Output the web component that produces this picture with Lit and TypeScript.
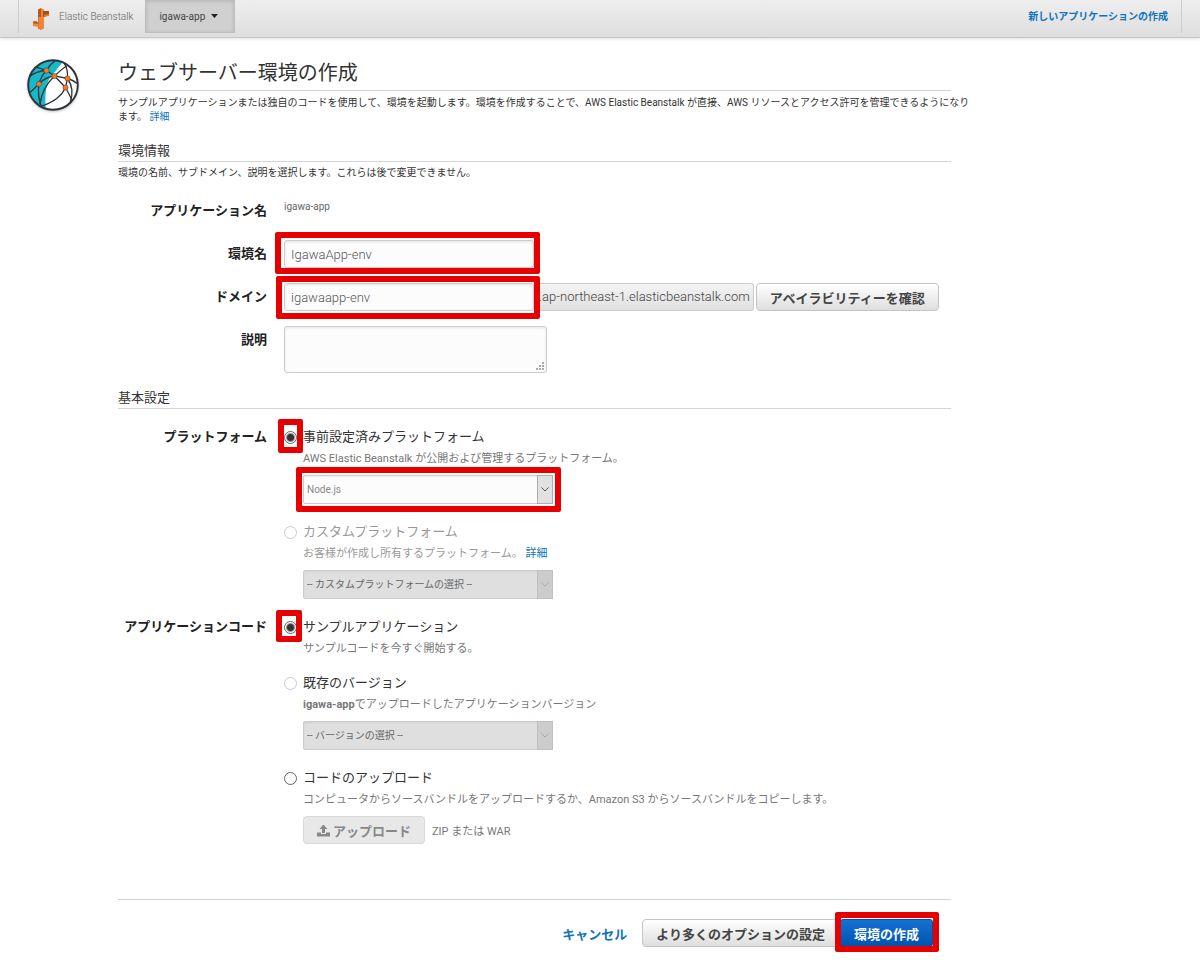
import { LitElement, html, css, svg, nothing } from "lit";
import { customElement, property } from "lit/decorators.js";

const controls = css`
  * {
    box-sizing: border-box;
  }
  button,
  input,
  select,
  textarea {
    font-family: inherit;
    margin: 0;
  }
  a {
    color: #0f74bc;
    text-decoration: none;
  }
`;

@customElement("eb-header")
class EbHeader extends LitElement {
  static styles = [
    controls,
    css`
      :host {
        display: block;
      }
      .bar {
        display: flex;
        align-items: flex-start;
        height: 38px;
        padding: 0 18px;
        border-bottom: 1px solid #c6c6c6;
        background: linear-gradient(#eeeeee, #dedede);
        box-shadow: 0 1px 3px rgba(0, 0, 0, 0.12);
      }
      .inner {
        display: flex;
        flex: 1;
        height: 33px;
        border-left: 1px solid #cdcdcd;
        border-right: 1px solid #cdcdcd;
      }
      .brand {
        display: flex;
        align-items: center;
        gap: 10px;
        padding: 0 12px 0 14px;
        font-size: 10px;
        font-weight: 300;
        color: #666;
      }
      .brand svg {
        width: 16px;
        height: 22px;
        margin-top: 4px;
      }
      .app {
        display: flex;
        align-items: center;
        gap: 6px;
        padding: 0 16px 0 13px;
        border: 1px solid #bdbdbd;
        border-top: 0;
        background: #d0d0d0;
        box-shadow: inset 0 1px 4px rgba(0, 0, 0, 0.14);
        font-size: 10px;
        color: #444;
      }
      .app svg {
        width: 7px;
        height: 4px;
      }
      .create {
        margin-left: auto;
        padding-right: 13px;
        font-size: 10px;
        font-weight: 700;
        line-height: 33px;
      }
    `,
  ];

  render() {
    return html`
      <header class="bar">
        <nav class="inner">
          <a class="brand" href="#">
            <svg viewBox="0 0 16 22" aria-hidden="true">
              <path d="M5 1.500 8 0v22l-3-1.500z" fill="#b05a22" />
              <path d="M8 0l3 1.500v19L8 22z" fill="#f58536" />
              <path d="M5.500 9H8v12.500l-2.500-1z" fill="#f58536" />
              <path d="M10 3h6v4.500L10 9z" fill="#9d5025" />
              <path d="M11 6.500 16 6v1.800l-5 1.200z" fill="#e87722" />
              <path d="M0 14.500h5.500V19L0 18z" fill="#f58536" />
              <path d="M0 13.500l3-.5 2.500 2V16L0 15.200z" fill="#b05a22" />
            </svg>
            <span>Elastic Beanstalk</span>
          </a>
          <button class="app" type="button">
            igawa-app
            <svg viewBox="0 0 7 4" aria-hidden="true"><path d="M0 0h7L3.500 4z" fill="#222" /></svg>
          </button>
          <a class="create" href="#">新しいアプリケーションの作成</a>
        </nav>
      </header>
    `;
  }
}

@customElement("eb-select")
class EbSelect extends LitElement {
  @property() label = "";
  @property() value = "";
  @property({ type: Boolean }) disabled = false;

  static styles = [
    controls,
    css`
      :host {
        display: block;
        position: relative;
        width: 250px;
      }
      .select {
        display: block;
        width: 100%;
        height: 29px;
        padding: 0 20px 0 3px;
        border: 1px solid #ccc;
        border-radius: 2px;
        appearance: none;
        background: #fcfcfc;
        box-shadow: inset 0 1px 2px rgba(0, 0, 0, 0.06);
        font-size: 10px;
        color: #888;
      }
      .select:disabled {
        background: #dfdfdf;
        color: #666;
        opacity: 1;
      }
      .arrow {
        position: absolute;
        top: 0;
        right: 0;
        bottom: 0;
        display: flex;
        align-items: center;
        justify-content: center;
        width: 16px;
        border: 1px solid #adadad;
        background: #e1e1e1;
        pointer-events: none;
      }
      .arrow svg {
        width: 8px;
        height: 5px;
        fill: none;
        stroke: #555;
      }
      .select:disabled + .arrow {
        border-color: #bfbfbf;
        background: #cccccc;
      }
      .select:disabled + .arrow svg {
        stroke: #aaa;
      }
    `,
  ];

  render() {
    return html`
      <select class="select" aria-label=${this.label} ?disabled=${this.disabled}>
        <option>${this.value}</option>
      </select>
      <span class="arrow">
        <svg viewBox="0 0 8 5" aria-hidden="true"><path d="M.5.5 4 4 7.500.5" /></svg>
      </span>
    `;
  }
}

const globe = svg`
  <defs><clipPath id="disc"><circle cx="27" cy="27" r="24.500" /></clipPath></defs>
  <circle cx="27" cy="27" r="24.500" fill="#fff" />
  <g clip-path="url(#disc)">
    <path d="M0 0H41C36 5 33 8 29 14 21 20 18 33 20 54H0z" fill="#13bacb" />
    <g fill="none" stroke="#2d3337" stroke-width="1.300">
      <path d="M30 2Q24 6 20.500 12.500 15 18 13 26 7 32 2 36" />
      <path d="M9 9Q14 10 20.500 12.500L28.500 18 41.500 20.500Q47 22 52 26" />
      <path d="M38 5Q42 10 41.500 20.500L39.500 29.500" />
      <path d="M28.500 18Q19 19 13 26 11 39 16 50" />
      <path d="M28.500 18 39.500 29.500Q43 36 46 42" />
      <path d="M28.500 18Q16 30 14 46" />
      <path d="M41.500 20.500Q49 31 44 45" />
      <path d="M39.500 29.500Q34 42 16 48" />
      <path d="M3 19Q10 13 20.500 12.500" />
      <path d="M28.500 18Q38 9 41 8" />
    </g>
  </g>
  <circle cx="27" cy="27" r="24.800" fill="none" stroke="#2d3337" stroke-width="1.900" />
  <g fill="#f47b20" stroke="#5e4030" stroke-width=".6">
    <circle cx="20.500" cy="12.500" r="2.600" />
    <circle cx="28.500" cy="18" r="2.600" />
    <circle cx="13" cy="26" r="2.600" />
    <circle cx="41.500" cy="20.500" r="2.600" />
    <circle cx="39.500" cy="29.500" r="2.600" />
  </g>
`;

interface Choice {
  id: string;
  title: string;
  detail: unknown;
  checked?: boolean;
  disabled?: boolean;
  faded?: boolean;
  mark?: string;
  extra?: unknown;
}

@customElement("app-root")
class AppRoot extends LitElement {
  static styles = [
    controls,
    css`
      :host {
        display: block;
        min-height: 100vh;
        background: #fff;
        color: #333;
        font-family: Roboto, "Noto Sans CJK JP", sans-serif;
        font-size: 10px;
      }
      .page {
        display: flex;
        padding: 20px 18px 20px 26px;
      }
      .globe {
        flex: none;
        width: 54px;
        height: 54px;
        margin-right: 38px;
        filter: drop-shadow(0 1px 1px rgba(0, 0, 0, 0.25));
      }
      .content {
        flex: 1;
        max-width: 833px;
      }
      h1 {
        margin: 0;
        padding-bottom: 2px;
        border-bottom: 1px solid #d5d5d5;
        font-size: 20px;
        font-weight: 400;
        line-height: 30px;
        color: #333;
      }
      h2 {
        margin: 17px 0 0;
        border-bottom: 1px solid #d5d5d5;
        font-size: 13px;
        font-weight: 400;
        line-height: 20px;
        color: #333;
      }
      .form + h2 {
        margin-top: 15px;
      }
      p {
        margin: 5px 0 0;
        line-height: 14px;
      }
      h2 + p {
        margin-top: 4px;
      }
      .intro {
        white-space: nowrap;
      }
      .form {
        display: grid;
        grid-template-columns: 149px 1fr;
        gap: 15px 17px;
        margin-top: 17px;
      }
      .choices {
        margin-top: 14px;
        row-gap: 0;
      }
      .label {
        font-size: 13px;
        font-weight: 700;
        line-height: 28px;
        text-align: right;
        color: #222;
      }
      .plain {
        line-height: 20px;
        color: #666;
      }
      .marked {
        position: relative;
        display: flex;
        width: fit-content;
      }
      .mark {
        position: absolute;
        inset: -8px -6px -6px -9px;
        border: 6px solid #e60000;
        border-radius: 2px;
        pointer-events: none;
      }
      .mark.domain {
        inset: -7px -6px -8px -8px;
      }
      .mark.select {
        inset: -8px -8px -8px -7px;
      }
      .mark.radio {
        inset: -12px -6px -9px -6px;
      }
      .mark.code {
        inset: -11px -5px -8px -8px;
      }
      .mark.primary {
        inset: -7px -6px -5px -5px;
      }
      .text {
        width: 250px;
        height: 28px;
        padding: 0 6px;
        border: 1px solid #ccc;
        border-radius: 3px;
        background: #fcfcfc;
        box-shadow: inset 0 1px 3px rgba(0, 0, 0, 0.1);
        font-size: 13px;
        font-weight: 300;
        color: #555;
      }
      .inline {
        display: flex;
        align-items: center;
      }
      .suffix {
        height: 28px;
        margin-right: 2px;
        padding: 0 3px 0 5px;
        border: 1px solid #ccc;
        border-left: 0;
        border-radius: 0 3px 3px 0;
        background: linear-gradient(#f4f4f4, #e0e0e0);
        font-size: 13px;
        font-weight: 300;
        line-height: 26px;
        color: #444;
      }
      .area {
        position: relative;
        width: 263px;
      }
      .area textarea {
        display: block;
        width: 100%;
        height: 47px;
        border: 1px solid #ccc;
        border-radius: 3px;
        background: #fcfcfc;
        box-shadow: inset 0 1px 3px rgba(0, 0, 0, 0.08);
        resize: none;
      }
      .area svg {
        position: absolute;
        right: 2px;
        bottom: 2px;
        width: 9px;
        height: 9px;
        fill: #aaa;
      }
      .button {
        height: 28px;
        padding: 0 13px;
        border: 1px solid #c4c4c4;
        border-radius: 4px;
        background: linear-gradient(#ffffff, #dedede);
        font-size: 13px;
        font-weight: 700;
        color: #444;
        white-space: nowrap;
      }
      .button.primary {
        border-color: #0a4f9c;
        border-radius: 3px;
        background: linear-gradient(#1571d3, #0053b0);
        color: #fff;
      }
      .button:disabled {
        display: flex;
        align-items: center;
        gap: 3px;
        border-color: #d8d8d8;
        background: #e8e8e8;
        color: #888;
      }
      .button svg {
        width: 13px;
        height: 13px;
        fill: #888;
      }
      .group {
        padding-top: 3px;
      }
      .choice {
        display: grid;
        grid-template-columns: 13px 1fr;
        column-gap: 6px;
        margin-bottom: 12px;
      }
      .choice:last-child {
        margin-bottom: 9px;
      }
      .choice .title + .body {
        grid-column: 2;
      }
      .choice > .marked {
        align-self: center;
      }
      .choice input {
        width: 13px;
        height: 13px;
        border: 1px solid #666;
        border-radius: 50%;
        appearance: none;
        background: #fff;
      }
      .choice input:checked {
        background: radial-gradient(circle, #333 3px, #fff 5px);
      }
      .choice input:disabled {
        border-color: #ccc;
      }
      .title {
        font-size: 13px;
        line-height: 22px;
        color: #333;
      }
      .detail {
        font-size: 11px;
        line-height: 22px;
        color: #777;
      }
      .faded .title,
      .faded .detail {
        color: #999;
      }
      .picker {
        margin: 5px 0;
      }
      .upload {
        display: flex;
        align-items: center;
        gap: 7px;
        margin-top: 5px;
        color: #777;
        font-size: 11px;
      }
      .footer {
        display: flex;
        align-items: center;
        justify-content: flex-end;
        margin-top: 46px;
        padding: 19px 18px 0 0;
        border-top: 1px solid #d5d5d5;
      }
      .cancel {
        margin-right: 15px;
        font-size: 13px;
        font-weight: 700;
      }
      .more {
        margin-right: 1px;
      }
    `,
  ];

  private choice(group: string, c: Choice) {
    return html`
      <div class="choice ${c.faded ? "faded" : ""}">
        <span class="marked">
          <input type="radio" id=${c.id} name=${group} ?checked=${c.checked} ?disabled=${c.disabled} />
          ${c.mark ? html`<span class="mark ${c.mark}"></span>` : nothing}
        </span>
        <label class="title" for=${c.id}>${c.title}</label>
        <div class="body">
          <div class="detail">${c.detail}</div>
          ${c.extra ?? nothing}
        </div>
      </div>
    `;
  }

  private platforms: Choice[] = [
    {
      id: "preset",
      title: "事前設定済みプラットフォーム",
      detail: "AWS Elastic Beanstalk が公開および管理するプラットフォーム。",
      checked: true,
      mark: "radio",
      extra: html`<div class="picker marked">
        <eb-select label="プラットフォーム" value="Node.js"></eb-select>
        <span class="mark select"></span>
      </div>`,
    },
    {
      id: "custom",
      title: "カスタムプラットフォーム",
      detail: html`お客様が作成し所有するプラットフォーム。 <a href="#">詳細</a>`,
      disabled: true,
      faded: true,
      extra: html`<div class="picker">
        <eb-select label="カスタムプラットフォーム" value="-- カスタムプラットフォームの選択 --" disabled></eb-select>
      </div>`,
    },
  ];

  private sources: Choice[] = [
    {
      id: "sample",
      title: "サンプルアプリケーション",
      detail: "サンプルコードを今すぐ開始する。",
      checked: true,
      mark: "code",
    },
    {
      id: "existing",
      title: "既存のバージョン",
      detail: html`<b>igawa-app</b>でアップロードしたアプリケーションバージョン`,
      disabled: true,
      extra: html`<div class="picker">
        <eb-select label="既存のバージョン" value="-- バージョンの選択 --" disabled></eb-select>
      </div>`,
    },
    {
      id: "own",
      title: "コードのアップロード",
      detail: "コンピュータからソースバンドルをアップロードするか、Amazon S3 からソースバンドルをコピーします。",
      extra: html`<div class="upload">
        <button class="button" type="button" disabled>
          <svg viewBox="0 0 13 13" aria-hidden="true">
            <path d="M6.500.5 10.500 5H8v4H5V5H2.500zM0 8.500h4V10h5V8.500h4v4H0z" />
          </svg>
          アップロード
        </button>
        <span>ZIP または WAR</span>
      </div>`,
    },
  ];

  render() {
    return html`
      <eb-header></eb-header>
      <main class="page">
        <svg class="globe" viewBox="0 0 54 54" aria-hidden="true">${globe}</svg>
        <form class="content">
          <h1>ウェブサーバー環境の作成</h1>
          <p class="intro">
            サンプルアプリケーションまたは独自のコードを使用して、環境を起動します。環境を作成することで、AWS Elastic Beanstalk が直接、AWS リソースとアクセス許可を管理できるようになり<br />ます。 <a href="#">詳細</a>
          </p>

          <h2>環境情報</h2>
          <p>環境の名前、サブドメイン、説明を選択します。これらは後で変更できません。</p>
          <div class="form">
            <span class="label">アプリケーション名</span>
            <span class="plain">igawa-app</span>

            <label class="label" for="env">環境名</label>
            <div class="marked">
              <input class="text" id="env" type="text" value="IgawaApp-env" />
              <span class="mark"></span>
            </div>

            <label class="label" for="domain">ドメイン</label>
            <div class="inline">
              <div class="marked">
                <input class="text" id="domain" type="text" value="igawaapp-env" />
                <span class="mark domain"></span>
              </div>
              <span class="suffix">.ap-northeast-1.elasticbeanstalk.com</span>
              <button class="button" type="button">アベイラビリティーを確認</button>
            </div>

            <label class="label" for="about">説明</label>
            <div class="area">
              <textarea id="about"></textarea>
              <svg viewBox="0 0 9 9" aria-hidden="true">
                <path d="M6 0h2v2H6zM3 3h2v2H3zM6 3h2v2H6zM0 6h2v2H0zM3 6h2v2H3zM6 6h2v2H6z" />
              </svg>
            </div>
          </div>

          <h2>基本設定</h2>
          <div class="form choices">
            <span class="label">プラットフォーム</span>
            <div class="group" role="radiogroup" aria-label="プラットフォーム">
              ${this.platforms.map((c) => this.choice("platform", c))}
            </div>
            <span class="label">アプリケーションコード</span>
            <div class="group" role="radiogroup" aria-label="アプリケーションコード">
              ${this.sources.map((c) => this.choice("source", c))}
            </div>
          </div>

          <div class="footer">
            <a class="cancel" href="#">キャンセル</a>
            <button class="button more" type="button">より多くのオプションの設定</button>
            <div class="marked">
              <button class="button primary" type="button">環境の作成</button>
              <span class="mark primary"></span>
            </div>
          </div>
        </form>
      </main>
    `;
  }
}
